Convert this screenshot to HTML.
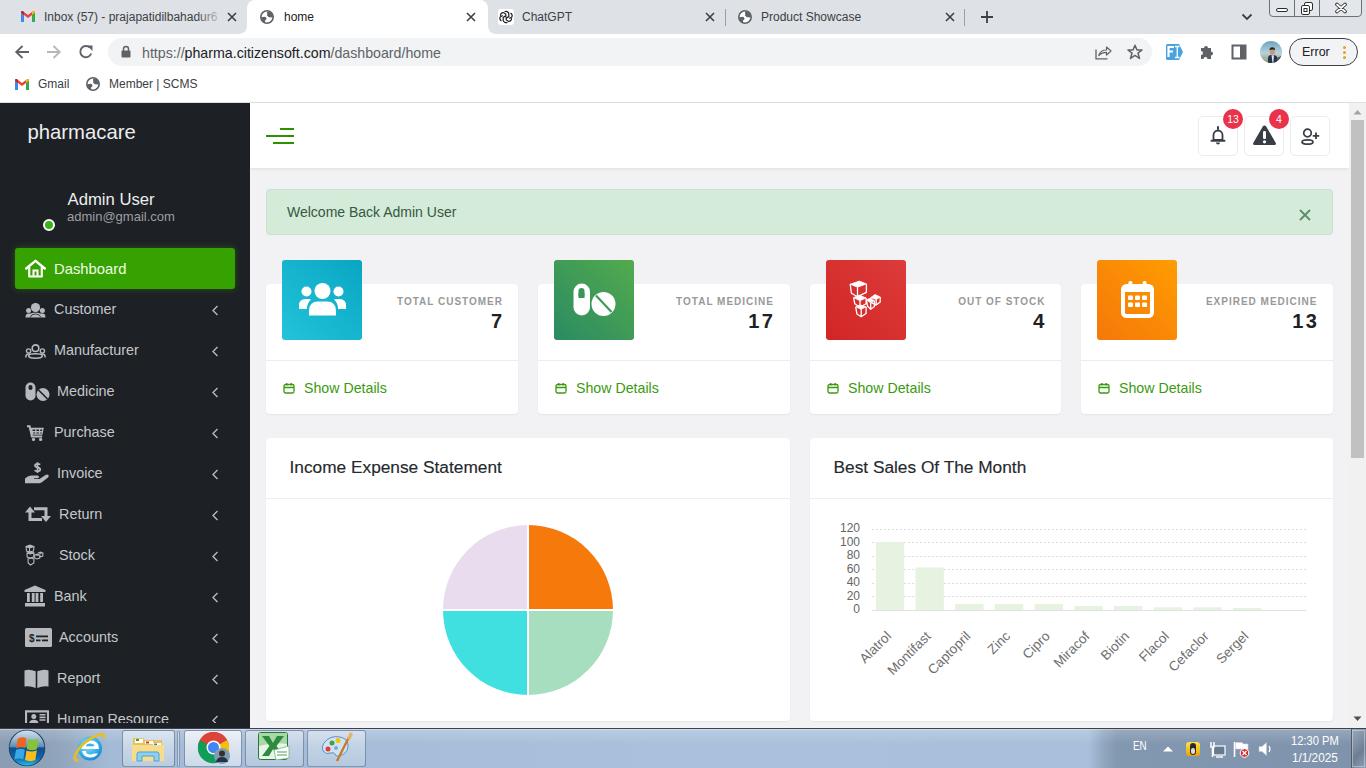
<!DOCTYPE html>
<html><head><meta charset="utf-8">
<style>
*{box-sizing:border-box;margin:0;padding:0}
html,body{width:1366px;height:768px;overflow:hidden;background:#fff;font-family:"Liberation Sans",sans-serif}
.a{position:absolute}
svg{display:block}
/* chrome */
#tabbar{left:0;top:0;width:1366px;height:34px;background:#dee1e6}
.tabt{font-size:12px;color:#3c4043;white-space:nowrap;top:10px;line-height:14px}
#toolbar{left:0;top:34px;width:1366px;height:35px;background:#fff}
#omni{left:108px;top:38px;width:1044px;height:28px;border-radius:14px;background:#f1f3f4}
#bm{left:0;top:69px;width:1366px;height:34px;background:#fff;border-bottom:1px solid #e0e0e0}
/* sidebar */
#side{left:0;top:103px;width:250px;height:625px;background:#1d2024;overflow:hidden}
.mi{left:54px;font-size:14.4px;color:#c4c8cc;line-height:16px;white-space:nowrap}
.chev{left:211px;width:8px;height:10px}
/* content */
#main{left:250px;top:103px;width:1099px;height:625px;background:#f2f2f4;overflow:hidden}
#hdr{left:250px;top:103px;width:1099px;height:65px;background:#fff;box-shadow:0 1px 3px rgba(0,0,0,.08)}
.card{background:#fff;border-radius:4px;box-shadow:0 1px 2px rgba(0,0,0,.06)}
</style></head><body>

<!-- TAB BAR -->
<div id="tabbar" class="a"></div>
<div class="a" style="left:247px;top:0;width:241px;height:34px;background:#fff;border-radius:8px 8px 0 0"></div>
<div class="a" style="left:239px;top:26px;width:8px;height:8px;background:#fff"></div>
<div class="a" style="left:231px;top:18px;width:16px;height:16px;background:#dee1e6;border-bottom-right-radius:8px"></div>
<div class="a" style="left:488px;top:26px;width:8px;height:8px;background:#fff"></div>
<div class="a" style="left:488px;top:18px;width:16px;height:16px;background:#dee1e6;border-bottom-left-radius:8px"></div>


<!-- tab 1 -->
<svg class="a" style="left:20px;top:10px" width="16" height="13" viewBox="0 0 16 13">
<path d="M1 2.5 L1 12 L4 12 L4 5 L8 8 L12 5 L12 12 L15 12 L15 2.5 Q15 0.5 13 1.2 L8 5 L3 1.2 Q1 0.5 1 2.5Z" fill="#ea4335"/>
<path d="M1 2.5 L1 12 L4 12 L4 5 L1 2.6Z" fill="#4285f4"/>
<path d="M12 5 L12 12 L15 12 L15 2.5 Z" fill="#34a853"/>
<path d="M15 2.5 Q15 0.5 13 1.2 L12 2 L12 5 Z" fill="#fbbc04"/>
<path d="M1 2.5 Q1 0.5 3 1.2 L4 2 L4 5 Z" fill="#c5221f"/>
</svg>
<div class="a tabt" style="left:44px;width:176px;overflow:hidden">Inbox (57) - prajapatidilbahadur6</div>
<div class="a" style="left:196px;top:6px;width:28px;height:22px;background:linear-gradient(90deg,rgba(222,225,230,0),#dee1e6)"></div>
<svg class="a" style="left:227px;top:12px" width="10" height="10" viewBox="0 0 10 10"><path d="M1 1L9 9M9 1L1 9" stroke="#3c4043" stroke-width="1.6"/></svg>
<!-- tab 2 active -->
<svg class="a" style="left:260px;top:10px" width="14" height="14" viewBox="0 0 14 14"><circle cx="7" cy="7" r="6.2" fill="#fff" stroke="#5f6368" stroke-width="1.6"/><path d="M7.5 1.2Q12.5 2 13 7.2L11 7.6Q9.8 6.5 9.5 7.5Q8.2 6.8 7.2 5.8Q6.5 4.8 7.5 4.2Q6.2 3.2 7.5 1.2Z" fill="#5f6368"/><path d="M1 7.2L4.8 6.8Q6.2 7 6.5 8.5Q6.8 9.6 5.2 10.2Q4.8 11 5.3 13Q1.2 11.5 1 7.2Z" fill="#5f6368"/></svg>
<div class="a tabt" style="left:284px;color:#202124">home</div>
<svg class="a" style="left:466px;top:12px" width="10" height="10" viewBox="0 0 10 10"><path d="M1 1L9 9M9 1L1 9" stroke="#3c4043" stroke-width="1.6"/></svg>
<!-- tab 3 -->
<div class="a" style="left:498px;top:9px;width:16px;height:16px;background:#fff;border-radius:3px"></div>
<svg class="a" style="left:499px;top:10px" width="14" height="14" viewBox="0 0 24 24"><g fill="none" stroke="#202124" stroke-width="2.1"><path d="M9.5 3.2a4.6 4.6 0 0 1 7.3 3.2v5l-4.3 2.5"/><path d="M14.5 20.8a4.6 4.6 0 0 1-7.3-3.2v-5l4.3-2.5"/><path d="M2.7 10.2a4.6 4.6 0 0 1 4.6-5.8l4.3 2.5v5"/><path d="M21.3 13.8a4.6 4.6 0 0 1-4.6 5.8l-4.3-2.5v-5"/><path d="M4.4 18.6a4.6 4.6 0 0 1-2.3-6.6l4.3-2.5"/><path d="M19.6 5.4a4.6 4.6 0 0 1 2.3 6.6l-4.3 2.5"/></g></svg>
<div class="a tabt" style="left:522px">ChatGPT</div>
<svg class="a" style="left:705px;top:12px" width="10" height="10" viewBox="0 0 10 10"><path d="M1 1L9 9M9 1L1 9" stroke="#3c4043" stroke-width="1.6"/></svg>
<div class="a" style="left:725px;top:9px;width:1px;height:17px;background:#9aa0a6"></div>
<!-- tab 4 -->
<svg class="a" style="left:738px;top:10px" width="14" height="14" viewBox="0 0 14 14"><circle cx="7" cy="7" r="6.2" fill="#fff" stroke="#5f6368" stroke-width="1.6"/><path d="M7.5 1.2Q12.5 2 13 7.2L11 7.6Q9.8 6.5 9.5 7.5Q8.2 6.8 7.2 5.8Q6.5 4.8 7.5 4.2Q6.2 3.2 7.5 1.2Z" fill="#5f6368"/><path d="M1 7.2L4.8 6.8Q6.2 7 6.5 8.5Q6.8 9.6 5.2 10.2Q4.8 11 5.3 13Q1.2 11.5 1 7.2Z" fill="#5f6368"/></svg>
<div class="a tabt" style="left:761px">Product Showcase</div>
<svg class="a" style="left:945px;top:12px" width="10" height="10" viewBox="0 0 10 10"><path d="M1 1L9 9M9 1L1 9" stroke="#3c4043" stroke-width="1.6"/></svg>
<div class="a" style="left:964px;top:9px;width:1px;height:17px;background:#9aa0a6"></div>
<svg class="a" style="left:980px;top:10px" width="14" height="14" viewBox="0 0 14 14"><path d="M7 1V13M1 7H13" stroke="#3c4043" stroke-width="1.8"/></svg>
<svg class="a" style="left:1241px;top:13px" width="12" height="8" viewBox="0 0 12 8"><path d="M1.5 1.5L6 6L10.5 1.5" fill="none" stroke="#3c4043" stroke-width="1.8"/></svg>
<!-- window controls -->
<div class="a" style="left:1269px;top:-3px;width:93px;height:20px;border:1px solid #6d7178;border-radius:0 0 4px 4px;background:#e3e6ea"></div>
<div class="a" style="left:1294px;top:0;width:1px;height:16px;background:#6d7178"></div>
<div class="a" style="left:1319px;top:0;width:1px;height:16px;background:#6d7178"></div>
<div class="a" style="left:1276px;top:8px;width:12px;height:4px;border:1px solid #2d2d2d;border-radius:2px;background:#fff"></div>
<svg class="a" style="left:1300px;top:2px" width="14" height="13" viewBox="0 0 14 13"><rect x="4.5" y="0.5" width="8" height="8" rx="1.5" fill="#fff" stroke="#2d2d2d"/><rect x="1.5" y="3.5" width="8" height="9" rx="1.5" fill="#fff" stroke="#2d2d2d"/><rect x="4" y="6.5" width="3" height="3" fill="none" stroke="#2d2d2d"/></svg>
<svg class="a" style="left:1334px;top:2px" width="14" height="12" viewBox="0 0 14 12"><path d="M3 2.5L11 9.5M11 2.5L3 9.5" stroke="#2d2d2d" stroke-width="3.6" stroke-linecap="round"/><path d="M3 2.5L11 9.5M11 2.5L3 9.5" stroke="#fff" stroke-width="1.8" stroke-linecap="round"/></svg>

<!-- TOOLBAR -->
<div id="toolbar" class="a"></div>
<svg class="a" style="left:14px;top:44px" width="16" height="16" viewBox="0 0 16 16"><path d="M15 8H2.5M8.5 2L2.2 8L8.5 14" fill="none" stroke="#5f6368" stroke-width="1.8"/></svg>
<svg class="a" style="left:46px;top:44px" width="16" height="16" viewBox="0 0 16 16"><path d="M1 8H13.5M7.5 2L13.8 8L7.5 14" fill="none" stroke="#b4b7bb" stroke-width="1.8"/></svg>
<svg class="a" style="left:78px;top:44px" width="16" height="16" viewBox="0 0 16 16"><path d="M13.2 9.5A5.6 5.6 0 1 1 11.8 3.6" fill="none" stroke="#5f6368" stroke-width="1.9"/><path d="M9 1.5H14.5V7Z" fill="#5f6368"/></svg>
<div id="omni" class="a"></div>
<svg class="a" style="left:121px;top:45px" width="10" height="13" viewBox="0 0 10 13"><path d="M2.5 6V4A2.5 2.5 0 0 1 7.5 4V6" fill="none" stroke="#5f6368" stroke-width="1.5"/><rect x="0.5" y="5.5" width="9" height="7" rx="1" fill="#5f6368"/></svg>
<div class="a" style="left:142px;top:44.5px;font-size:14.2px;line-height:16px;color:#5f6368;white-space:nowrap">https://<span style="color:#202124">pharma.citizensoft.com</span>/dashboard/home</div>
<svg class="a" style="left:1095px;top:44px" width="17" height="16" viewBox="0 0 17 16"><path d="M1 5.5V14.8H12.5" fill="none" stroke="#5f6368" stroke-width="1.3"/><path d="M3.8 11.5C4.8 7.8 7.5 6 11.5 6V3L16 7L11.5 11V8.3C8.2 8.3 5.8 9.3 3.8 11.5Z" fill="none" stroke="#5f6368" stroke-width="1.2" stroke-linejoin="round"/></svg>
<svg class="a" style="left:1127px;top:44px" width="16" height="16" viewBox="0 0 16 16"><path d="M8 1.2L10 6H15L11 9.2L12.5 14.5L8 11.4L3.5 14.5L5 9.2L1 6H6Z" fill="none" stroke="#5f6368" stroke-width="1.5" stroke-linejoin="round"/></svg>
<svg class="a" style="left:1166px;top:43px" width="18" height="18" viewBox="0 0 18 18"><path d="M0 2.5Q0 1 1.5 1H13L17 9L13 17H1.5Q0 17 0 15.5Z" fill="#4aa3e0"/><path d="M2.5 14V4H8M2.5 8.5H7" fill="none" stroke="#fff" stroke-width="2.2"/><path d="M9 3.5H13.5M9 14.5H13.5M11.25 3.5V14.5" fill="none" stroke="#fff" stroke-width="1.3"/></svg>
<svg class="a" style="left:1199px;top:44px" width="16" height="16" viewBox="0 0 16 16"><path d="M2 4H5A2 2 0 1 1 9 4H12V7.5A2 2 0 1 1 12 11.5V15H8.5A2 2 0 1 0 4.5 15H2V11A2 2 0 1 0 2 7Z" fill="#5f6368"/></svg>
<svg class="a" style="left:1231px;top:44px" width="16" height="16" viewBox="0 0 16 16"><rect x="1.5" y="1.5" width="13" height="13" fill="none" stroke="#5f6368" stroke-width="2"/><rect x="9" y="1" width="6" height="14" fill="#5f6368"/></svg>
<svg class="a" style="left:1260px;top:41px" width="22" height="22" viewBox="0 0 22 22"><defs><linearGradient id="avg" x1="0" y1="0" x2="0" y2="1"><stop offset="0" stop-color="#6fa3bd"/><stop offset=".55" stop-color="#b7d3de"/><stop offset=".75" stop-color="#a9b49e"/><stop offset="1" stop-color="#8f9c87"/></linearGradient><clipPath id="avc"><circle cx="11" cy="11" r="11"/></clipPath></defs><g clip-path="url(#avc)"><rect width="22" height="22" fill="url(#avg)"/><path d="M8 22V17Q8 14.5 10.5 14H14Q17 14.5 17.5 17V22Z" fill="#25324a"/><path d="M11.5 14.2L12.5 22H13.3L14 14.2Z" fill="#dfe8ee"/><ellipse cx="12.3" cy="10.3" rx="2.7" ry="3.4" fill="#c49a80"/><path d="M9.5 9Q9.5 6.2 12.3 6.2Q15.2 6.2 15 9Q13 7.8 9.5 9Z" fill="#2a2220"/><path d="M17.5 17L21 15V22H18Z" fill="#4a4a44"/></g></svg>
<div class="a" style="left:1289px;top:38px;width:69px;height:28px;border:1px solid #3c4043;border-radius:14px;background:#f1f3f4"></div>
<div class="a" style="left:1302px;top:45px;font-size:12.5px;line-height:14px;color:#202124">Error</div>
<div class="a" style="left:1343px;top:46px;width:3px;height:3px;border-radius:2px;background:#e8a317"></div>
<div class="a" style="left:1343px;top:51px;width:3px;height:3px;border-radius:2px;background:#e8a317"></div>
<div class="a" style="left:1343px;top:56px;width:3px;height:3px;border-radius:2px;background:#e8a317"></div>

<!-- BOOKMARKS -->
<div id="bm" class="a"></div>
<svg class="a" style="left:14px;top:78px" width="16" height="13" viewBox="0 0 16 13">
<path d="M1 2.5 L1 12 L4 12 L4 5 L8 8 L12 5 L12 12 L15 12 L15 2.5 Q15 0.5 13 1.2 L8 5 L3 1.2 Q1 0.5 1 2.5Z" fill="#ea4335"/>
<path d="M1 2.5 L1 12 L4 12 L4 5 L1 2.6Z" fill="#4285f4"/>
<path d="M12 5 L12 12 L15 12 L15 2.5 Z" fill="#34a853"/>
<path d="M15 2.5 Q15 0.5 13 1.2 L12 2 L12 5 Z" fill="#fbbc04"/>
<path d="M1 2.5 Q1 0.5 3 1.2 L4 2 L4 5 Z" fill="#c5221f"/>
</svg>
<div class="a" style="left:38px;top:77px;font-size:12px;line-height:14px;color:#3c4043">Gmail</div>
<svg class="a" style="left:86px;top:77px" width="14" height="14" viewBox="0 0 14 14"><circle cx="7" cy="7" r="6.2" fill="#fff" stroke="#5f6368" stroke-width="1.6"/><path d="M7.5 1.2Q12.5 2 13 7.2L11 7.6Q9.8 6.5 9.5 7.5Q8.2 6.8 7.2 5.8Q6.5 4.8 7.5 4.2Q6.2 3.2 7.5 1.2Z" fill="#5f6368"/><path d="M1 7.2L4.8 6.8Q6.2 7 6.5 8.5Q6.8 9.6 5.2 10.2Q4.8 11 5.3 13Q1.2 11.5 1 7.2Z" fill="#5f6368"/></svg>
<div class="a" style="left:109px;top:77px;font-size:12px;line-height:14px;color:#3c4043">Member | SCMS</div>


<!-- SIDEBAR -->
<div id="side" class="a"></div>
<div class="a" style="left:27.5px;top:121.5px;font-size:20.3px;line-height:20px;color:#eceeef;white-space:nowrap">pharmacare</div>
<div class="a" style="left:67.5px;top:191.8px;font-size:16.7px;line-height:16px;color:#eceeef;white-space:nowrap">Admin User</div>
<div class="a" style="left:67px;top:210px;font-size:13px;line-height:13px;color:#9c9fa3;white-space:nowrap">admin@gmail.com</div>
<div class="a" style="left:43px;top:219px;width:12px;height:12px;border-radius:6px;background:#3cb11a;border:2px solid #fff"></div>
<div class="a" style="left:15px;top:248px;width:220px;height:41px;border-radius:3px;background:#36a201;box-shadow:0 0 7px rgba(60,180,10,.38)"></div>
<svg class="a" style="left:25px;top:259px" width="21" height="19" viewBox="0 0 21 19"><path d="M1.2 9.5L10.5 1.8L19.8 9.5" fill="none" stroke="#fff" stroke-width="2.4" stroke-linecap="round" stroke-linejoin="round"/><path d="M4.2 8V17.5H16.8V8" fill="none" stroke="#fff" stroke-width="2.2" stroke-linejoin="round"/><path d="M8.5 17.5V11.5H12.5V17.5" fill="none" stroke="#fff" stroke-width="2"/></svg>
<div class="a" style="left:54px;top:261.5px;font-size:14.8px;line-height:14px;color:#eefce6;white-space:nowrap">Dashboard</div>
<svg class="a" style="left:25px;top:303px" width="21" height="15" viewBox="0 0 21 15"><circle cx="10.5" cy="4.6" r="4.6" fill="#b6babe"/><circle cx="3.6" cy="7.6" r="2.5" fill="#b6babe"/><circle cx="17.4" cy="7.6" r="2.5" fill="#b6babe"/><path d="M0.5 14.5Q0.5 10.6 3.5 10.6H6Q7 9.8 8.5 9.8H12.5Q14 9.8 15 10.6H17.5Q20.5 10.6 20.5 14.5Z" fill="#b6babe"/><path d="M5 14.5Q6 11 10.5 11Q15 11 16 14.5" fill="none" stroke="#1e2125" stroke-width="0.8"/></svg>
<div class="a mi" style="left:54px;top:302.0px;line-height:14px">Customer</div>
<svg class="a" style="left:211px;top:305px" width="8" height="11" viewBox="0 0 8 11"><path d="M6.5 1L2 5.5L6.5 10" fill="none" stroke="#b6babe" stroke-width="1.4"/></svg>
<svg class="a" style="left:25px;top:344px" width="21" height="15" viewBox="0 0 21 15"><circle cx="10.5" cy="4.2" r="3.3" fill="none" stroke="#b6babe" stroke-width="1.6"/><circle cx="3.6" cy="7" r="2.1" fill="none" stroke="#b6babe" stroke-width="1.4"/><circle cx="17.4" cy="7" r="2.1" fill="none" stroke="#b6babe" stroke-width="1.4"/><ellipse cx="10.5" cy="12" rx="6.8" ry="2.2" fill="none" stroke="#b6babe" stroke-width="1.6"/><path d="M0.8 13.5Q0.8 10 3.6 10Q5 10 5.5 10.5M20.2 13.5Q20.2 10 17.4 10Q16 10 15.5 10.5" fill="none" stroke="#b6babe" stroke-width="1.5"/></svg>
<div class="a mi" style="left:54px;top:343.0px;line-height:14px">Manufacturer</div>
<svg class="a" style="left:211px;top:346px" width="8" height="11" viewBox="0 0 8 11"><path d="M6.5 1L2 5.5L6.5 10" fill="none" stroke="#b6babe" stroke-width="1.4"/></svg>
<svg class="a" style="left:25px;top:382px" width="25" height="19" viewBox="0 0 25 19"><rect x="0.5" y="0.5" width="10" height="18" rx="5" fill="#b6babe"/><rect x="3.5" y="3" width="4" height="5" rx="2" fill="#1e2125"/><circle cx="18" cy="12.5" r="6.5" fill="#b6babe"/><path d="M13.5 8L22.5 17" stroke="#1e2125" stroke-width="1.6"/></svg>
<div class="a mi" style="left:57px;top:384.0px;line-height:14px">Medicine</div>
<svg class="a" style="left:211px;top:387px" width="8" height="11" viewBox="0 0 8 11"><path d="M6.5 1L2 5.5L6.5 10" fill="none" stroke="#b6babe" stroke-width="1.4"/></svg>
<svg class="a" style="left:27px;top:425px" width="17" height="16" viewBox="0 0 17 16"><path d="M0 1.3H2.6L4.9 11.6H15.2" fill="none" stroke="#b6babe" stroke-width="2"/><path d="M3.2 2.8H16.8L15.4 9.8H4.6Z" fill="#b6babe"/><path d="M5.6 4.6H8.2V6H5.6Z M9.4 4.6H12V6H9.4Z M13.2 4.6H15.2L15 6H13.2Z M6 7.4H8.2V8.4H6.1Z M9.4 7.4H12V8.4H9.4Z M13.2 7.4H14.7L14.6 8.4H13.2Z" fill="#1e2125"/><circle cx="6.5" cy="14.4" r="1.6" fill="#b6babe"/><circle cx="13.6" cy="14.4" r="1.6" fill="#b6babe"/></svg>
<div class="a mi" style="left:54px;top:425.0px;line-height:14px">Purchase</div>
<svg class="a" style="left:211px;top:428px" width="8" height="11" viewBox="0 0 8 11"><path d="M6.5 1L2 5.5L6.5 10" fill="none" stroke="#b6babe" stroke-width="1.4"/></svg>
<svg class="a" style="left:25px;top:462px" width="25" height="23" viewBox="0 0 25 23"><path d="M15.2 2.6Q14.4 1.8 12.5 1.8Q10 1.8 10 3.6Q10 5 12.5 5.3Q15.2 5.6 15.2 7.4Q15.2 9.3 12.5 9.3Q10.5 9.3 9.6 8.3M12.5 0.3V11" fill="none" stroke="#b6babe" stroke-width="1.7"/><path d="M0 16.5Q3 13.5 6.5 13.5H12.5Q14 13.5 14 15Q14 16.3 12.5 16.3H9V17H14.5L20.5 13Q22.5 12 23.5 13.3Q24.2 14.5 23 15.5L16.5 20.5Q15.5 21.2 14 21.2H0Z" fill="#b6babe"/></svg>
<div class="a mi" style="left:57px;top:466.0px;line-height:14px">Invoice</div>
<svg class="a" style="left:211px;top:469px" width="8" height="11" viewBox="0 0 8 11"><path d="M6.5 1L2 5.5L6.5 10" fill="none" stroke="#b6babe" stroke-width="1.4"/></svg>
<svg class="a" style="left:25px;top:506px" width="26" height="17" viewBox="0 0 26 17"><path d="M5 5.5V13.5H17" fill="none" stroke="#b6babe" stroke-width="3"/><path d="M0 6.5L5 0.5L10 6.5Z" fill="#b6babe"/><path d="M21 10.5V2.8H9" fill="none" stroke="#b6babe" stroke-width="3"/><path d="M16 10L21 16L26 10Z" fill="#b6babe"/></svg>
<div class="a mi" style="left:59px;top:507.0px;line-height:14px">Return</div>
<svg class="a" style="left:211px;top:510px" width="8" height="11" viewBox="0 0 8 11"><path d="M6.5 1L2 5.5L6.5 10" fill="none" stroke="#b6babe" stroke-width="1.4"/></svg>
<svg class="a" style="left:25px;top:544px" width="19" height="23" viewBox="0 0 19 23"><g fill="none" stroke="#b6babe" stroke-width="1.1"><path d="M1 2.5L5 1L9 2.5L8.5 7L4.5 8L1.5 7Z M1 2.5L4.5 4L9 2.5 M4.5 4V8"/><path d="M2 9L5.5 8L9 9L8.7 13L5 14L2.2 13Z M2 9L5.2 10L9 9"/><path d="M3 15L6 14L9 15L8.8 19L5.5 21L3.2 19Z"/><path d="M9.5 11L12.5 10L15 11L14.8 14L12 15L9.7 14Z M13 9L15.5 8L18 9L17.8 12L15 13L14 12.5"/></g><path d="M1 2.5L5 1L9 2.5L4.5 4Z M2 9L5.5 8L9 9L5.2 10Z M10 11L12.5 10L15 11L12.5 12Z M13.5 9L15.5 8L18 9L15.5 10Z" fill="#b6babe"/></svg>
<div class="a mi" style="left:59px;top:548.0px;line-height:14px">Stock</div>
<svg class="a" style="left:211px;top:551px" width="8" height="11" viewBox="0 0 8 11"><path d="M6.5 1L2 5.5L6.5 10" fill="none" stroke="#b6babe" stroke-width="1.4"/></svg>
<svg class="a" style="left:24px;top:585px" width="22" height="22" viewBox="0 0 22 22"><path d="M11 0.5L21.5 5V7H0.5V5Z" fill="#b6babe"/><rect x="3" y="8" width="2.8" height="9" fill="#b6babe"/><rect x="7.8" y="8" width="2.8" height="9" fill="#b6babe"/><rect x="11.6" y="8" width="2.8" height="9" fill="#b6babe"/><rect x="16.2" y="8" width="2.8" height="9" fill="#b6babe"/><rect x="1" y="18" width="20" height="3.5" fill="#b6babe"/></svg>
<div class="a mi" style="left:54px;top:589.0px;line-height:14px">Bank</div>
<svg class="a" style="left:211px;top:592px" width="8" height="11" viewBox="0 0 8 11"><path d="M6.5 1L2 5.5L6.5 10" fill="none" stroke="#b6babe" stroke-width="1.4"/></svg>
<svg class="a" style="left:25px;top:628px" width="27" height="19" viewBox="0 0 27 19"><rect x="0" y="0" width="27" height="19" rx="1.5" fill="#b6babe"/><text x="4" y="14" font-family="Liberation Sans" font-weight="bold" font-size="10" fill="#1e2125">$</text><rect x="11" y="7.5" width="12" height="1.8" fill="#1e2125"/><rect x="11" y="11.5" width="4.5" height="1.8" fill="#1e2125"/><rect x="17" y="11.5" width="6" height="1.8" fill="#1e2125"/></svg>
<div class="a mi" style="left:59px;top:630.0px;line-height:14px">Accounts</div>
<svg class="a" style="left:211px;top:633px" width="8" height="11" viewBox="0 0 8 11"><path d="M6.5 1L2 5.5L6.5 10" fill="none" stroke="#b6babe" stroke-width="1.4"/></svg>
<svg class="a" style="left:24px;top:669px" width="25" height="19" viewBox="0 0 25 19"><path d="M0.5 1.5Q5 -0.5 11.7 2.2V19Q6 16.5 0.5 17.5Z" fill="#b6babe"/><path d="M24.5 1.5Q20 -0.5 13.3 2.2V19Q19 16.5 24.5 17.5Z" fill="#b6babe"/></svg>
<div class="a mi" style="left:57px;top:671.0px;line-height:14px">Report</div>
<svg class="a" style="left:211px;top:674px" width="8" height="11" viewBox="0 0 8 11"><path d="M6.5 1L2 5.5L6.5 10" fill="none" stroke="#b6babe" stroke-width="1.4"/></svg>
<svg class="a" style="left:25px;top:710px" width="24" height="19" viewBox="0 0 24 19"><path d="M1 18V1.3H23V18" fill="none" stroke="#b6babe" stroke-width="2.2"/><circle cx="8.8" cy="6.6" r="2.5" fill="#b6babe"/><path d="M4.2 13.5Q4.2 9.8 8.8 9.8Q13.4 9.8 13.4 13.5Z" fill="#b6babe"/><path d="M14.5 4.8H20.5M14.5 7.4H20.5M14.5 10H20.5" stroke="#b6babe" stroke-width="1.6"/></svg>
<div class="a mi" style="left:57px;top:712.0px;line-height:14px">Human Resource</div>
<svg class="a" style="left:211px;top:715px" width="8" height="11" viewBox="0 0 8 11"><path d="M6.5 1L2 5.5L6.5 10" fill="none" stroke="#b6babe" stroke-width="1.4"/></svg>


<div class="a" style="left:0;top:723px;width:250px;height:5px;background:#1d2024"></div>
<!-- MAIN -->
<div id="main" class="a"></div>
<div id="hdr" class="a"></div>
<svg class="a" style="left:265px;top:127px" width="30" height="18" viewBox="0 0 30 18"><path d="M15 2H29M1 9H29M8 16H29" stroke="#2f9000" stroke-width="2.2"/></svg>
<!-- header buttons -->
<div class="a" style="left:1198px;top:116px;width:40px;height:40px;border:1px solid #ececec;border-radius:5px;background:#fff"></div>
<div class="a" style="left:1244px;top:116px;width:40px;height:40px;border:1px solid #ececec;border-radius:5px;background:#fff"></div>
<div class="a" style="left:1290px;top:116px;width:40px;height:40px;border:1px solid #ececec;border-radius:5px;background:#fff"></div>
<svg class="a" style="left:1210px;top:126px" width="16" height="19" viewBox="0 0 16 19"><path d="M8 1V3" stroke="#3a3d46" stroke-width="2" stroke-linecap="round"/><path d="M3.5 14V9A4.5 4.5 0 0 1 12.5 9V14Z" fill="none" stroke="#3a3d46" stroke-width="1.8" stroke-linejoin="round"/><path d="M1.5 14.8H14.5" stroke="#3a3d46" stroke-width="2" stroke-linecap="round"/><path d="M6 16.5A2 2 0 0 0 10 16.5Z" fill="#3a3d46"/></svg>
<svg class="a" style="left:1252px;top:124px" width="25" height="22" viewBox="0 0 25 22"><path d="M12.5 1.5Q13.5 1.5 14.2 2.6L23.8 19Q24.3 21 22.5 21H2.5Q0.7 21 1.2 19L10.8 2.6Q11.5 1.5 12.5 1.5Z" fill="#3a3d46"/><rect x="11" y="7" width="3" height="8" rx="1.2" fill="#fff"/><circle cx="12.5" cy="17.8" r="1.6" fill="#fff"/></svg>
<svg class="a" style="left:1301px;top:128px" width="19" height="17" viewBox="0 0 19 17"><circle cx="6.5" cy="5" r="3.8" fill="none" stroke="#3a3d46" stroke-width="1.7"/><ellipse cx="6.5" cy="14" rx="5.5" ry="2.2" fill="none" stroke="#3a3d46" stroke-width="1.7"/><path d="M15 4.5V11M11.8 7.8H18.2" stroke="#3a3d46" stroke-width="1.8"/></svg>
<div class="a" style="left:1223px;top:109px;width:20px;height:20px;border-radius:10px;background:#e9334a;color:#fff;font-size:10.5px;line-height:20px;text-align:center">13</div>
<div class="a" style="left:1269px;top:109px;width:20px;height:20px;border-radius:10px;background:#e9334a;color:#fff;font-size:10.5px;line-height:20px;text-align:center">4</div>

<!-- ALERT -->
<div class="a" style="left:266px;top:189px;width:1067px;height:46px;background:#d4ebd9;border:1px solid #c6e3cc;border-radius:4px"></div>
<div class="a" style="left:287px;top:204.9px;font-size:14px;line-height:14px;color:#36583f;white-space:nowrap">Welcome Back Admin User</div>
<svg class="a" style="left:1299px;top:209px" width="12" height="12" viewBox="0 0 12 12"><path d="M1 1L11 11M11 1L1 11" stroke="#5c8d69" stroke-width="1.8"/></svg>
<div class="a card" style="left:266px;top:284px;width:252px;height:130px"></div>
<div class="a" style="left:266px;top:360px;width:252px;height:1px;background:#ececec"></div>
<div class="a" style="left:282px;top:260px;width:80px;height:80px;border-radius:3px;background:linear-gradient(45deg,#23c3da,#09a6c3)"></div>
<svg class="a" style="left:299px;top:283px" width="47" height="33" viewBox="0 0 47 33"><circle cx="23.5" cy="8" r="8" fill="#fff"/><circle cx="7.5" cy="8.5" r="5" fill="#fff"/><circle cx="39.5" cy="8.5" r="5" fill="#fff"/><path d="M10 32.5V28Q10 18.5 19 18.5H28Q37 18.5 37 28V32.5Z" fill="#fff"/><path d="M0 26V22.5Q0 16 6.5 16H10Q11.5 16 12 16.5Q8.5 19.5 8 24.5V26Z M47 26V22.5Q47 16 40.5 16H37Q35.5 16 35 16.5Q38.5 19.5 39 24.5V26Z" fill="#fff"/></svg>
<div class="a" style="left:266px;width:237px;top:296.8px;font-size:10px;line-height:10px;font-weight:bold;letter-spacing:1px;color:#999;text-align:right;white-space:nowrap">TOTAL CUSTOMER</div>
<div class="a" style="left:266px;width:236px;top:311.4px;font-size:20px;line-height:20px;font-weight:bold;color:#1f2124;text-align:right">7</div>
<svg class="a" style="left:283px;top:382px" width="12" height="12" viewBox="0 0 12 12"><rect x="1" y="2.5" width="10" height="8.5" rx="1.5" fill="none" stroke="#3a9a0e" stroke-width="1.3"/><path d="M1 5.5H11M3.8 1V3.5M8.2 1V3.5" stroke="#3a9a0e" stroke-width="1.3"/></svg>
<div class="a" style="left:304px;top:381px;font-size:14.2px;line-height:14px;color:#3b9a0f;white-space:nowrap">Show Details</div>
<div class="a card" style="left:538px;top:284px;width:252px;height:130px"></div>
<div class="a" style="left:538px;top:360px;width:252px;height:1px;background:#ececec"></div>
<div class="a" style="left:554px;top:260px;width:80px;height:80px;border-radius:3px;background:linear-gradient(45deg,#2a8b62,#53aa4d)"></div>
<svg class="a" style="left:573px;top:283px" width="43" height="33" viewBox="0 0 43 33"><rect x="0.5" y="0.5" width="16.5" height="32" rx="8.25" fill="#fff"/><rect x="5.5" y="5" width="6" height="10" rx="3" fill="#3a9658"/><rect x="5.5" y="10" width="6" height="5" fill="#3a9658"/><circle cx="30.5" cy="21" r="12" fill="#fff"/><path d="M23 12.5L38.5 29" stroke="#3f9a56" stroke-width="2.2"/></svg>
<div class="a" style="left:538px;width:236px;top:296.8px;font-size:10px;line-height:10px;font-weight:bold;letter-spacing:1px;color:#999;text-align:right;white-space:nowrap">TOTAL MEDICINE</div>
<div class="a" style="left:538px;width:237.5px;top:311.4px;font-size:20px;line-height:20px;font-weight:bold;color:#1f2124;text-align:right;letter-spacing:2.5px">17</div>
<svg class="a" style="left:555px;top:382px" width="12" height="12" viewBox="0 0 12 12"><rect x="1" y="2.5" width="10" height="8.5" rx="1.5" fill="none" stroke="#3a9a0e" stroke-width="1.3"/><path d="M1 5.5H11M3.8 1V3.5M8.2 1V3.5" stroke="#3a9a0e" stroke-width="1.3"/></svg>
<div class="a" style="left:576px;top:381px;font-size:14.2px;line-height:14px;color:#3b9a0f;white-space:nowrap">Show Details</div>
<div class="a card" style="left:810px;top:284px;width:251px;height:130px"></div>
<div class="a" style="left:810px;top:360px;width:251px;height:1px;background:#ececec"></div>
<div class="a" style="left:826px;top:260px;width:80px;height:80px;border-radius:3px;background:linear-gradient(45deg,#d22525,#dc3c3a)"></div>
<svg class="a" style="left:845px;top:275px" width="40" height="47" viewBox="0 0 40 47"><path d="M5.2 9.2L6.4 18.225L12.5 21.7L21.4 17.450000000000003L21.4 8.9 M12.5 12.2L12.5 21.7M8.6 22.6L9.799999999999999 28.775000000000002L15 32.2L21.1 28.75L21.1 22.9 M15 25.7L15 32.2M10.7 31.8L11.899999999999999 38.925L16.2 41.8L21.1 38.55L21.1 31.8 M16.2 34.3L16.2 41.8M21.4 25L22.599999999999998 31.175L25.7 34.3L29.4 31.55L29.4 25.7 M25.7 27.8L25.7 34.3M25.7 22.6L26.9 27.825000000000003L31.2 30.0L35.2 26.95L35.2 22 M31.2 24.5L31.2 30.0" fill="none" stroke="#fff" stroke-width="1.3" stroke-linejoin="round"/><path d="M5.2 9.2L14.4 6.1L21.4 8.9L12.5 12.2ZM8.6 22.6L14.4 20.2L21.1 22.9L15 25.7ZM10.7 31.8L15.6 30L21.1 31.8L16.2 34.3ZM21.4 25L25 23.2L29.4 25.7L25.7 27.8ZM25.7 22.6L30 19.6L35.2 22L31.2 24.5Z" fill="#fff" stroke="#fff" stroke-width="0.8" stroke-linejoin="round"/></svg>
<div class="a" style="left:810px;width:235.5px;top:296.8px;font-size:10px;line-height:10px;font-weight:bold;letter-spacing:1px;color:#999;text-align:right;white-space:nowrap">OUT OF STOCK</div>
<div class="a" style="left:810px;width:234.5px;top:311.4px;font-size:20.5px;line-height:20px;font-weight:bold;color:#1f2124;text-align:right">4</div>
<svg class="a" style="left:827px;top:382px" width="12" height="12" viewBox="0 0 12 12"><rect x="1" y="2.5" width="10" height="8.5" rx="1.5" fill="none" stroke="#3a9a0e" stroke-width="1.3"/><path d="M1 5.5H11M3.8 1V3.5M8.2 1V3.5" stroke="#3a9a0e" stroke-width="1.3"/></svg>
<div class="a" style="left:848px;top:381px;font-size:14.2px;line-height:14px;color:#3b9a0f;white-space:nowrap">Show Details</div>
<div class="a card" style="left:1081px;top:284px;width:252px;height:130px"></div>
<div class="a" style="left:1081px;top:360px;width:252px;height:1px;background:#ececec"></div>
<div class="a" style="left:1097px;top:260px;width:80px;height:80px;border-radius:3px;background:linear-gradient(45deg,#f5780a,#ff9c00)"></div>
<svg class="a" style="left:1121px;top:281px" width="33" height="37" viewBox="0 0 33 37"><rect x="7.5" y="0" width="3.8" height="7" rx="1.5" fill="#fff"/><rect x="21.7" y="0" width="3.8" height="7" rx="1.5" fill="#fff"/><rect x="2" y="5" width="29" height="30" rx="3.5" fill="none" stroke="#fff" stroke-width="4"/><rect x="2" y="5" width="29" height="6" fill="#fff"/><rect x="7" y="14.5" width="5" height="4.5" rx="1" fill="#fff"/><rect x="14" y="14.5" width="5" height="4.5" rx="1" fill="#fff"/><rect x="21" y="14.5" width="5" height="4.5" rx="1" fill="#fff"/><rect x="7" y="21.5" width="5" height="4.5" rx="1" fill="#fff"/><rect x="14" y="21.5" width="5" height="4.5" rx="1" fill="#fff"/><rect x="21" y="21.5" width="5" height="4.5" rx="1" fill="#fff"/></svg>
<div class="a" style="left:1081px;width:236.5px;top:296.8px;font-size:10px;line-height:10px;font-weight:bold;letter-spacing:1px;color:#999;text-align:right;white-space:nowrap">EXPIRED MEDICINE</div>
<div class="a" style="left:1081px;width:238.5px;top:311.4px;font-size:20px;line-height:20px;font-weight:bold;color:#1f2124;text-align:right;letter-spacing:2.5px">13</div>
<svg class="a" style="left:1098px;top:382px" width="12" height="12" viewBox="0 0 12 12"><rect x="1" y="2.5" width="10" height="8.5" rx="1.5" fill="none" stroke="#3a9a0e" stroke-width="1.3"/><path d="M1 5.5H11M3.8 1V3.5M8.2 1V3.5" stroke="#3a9a0e" stroke-width="1.3"/></svg>
<div class="a" style="left:1119px;top:381px;font-size:14.2px;line-height:14px;color:#3b9a0f;white-space:nowrap">Show Details</div>

<!-- CHART CARDS -->
<div class="a card" style="left:266px;top:438px;width:524px;height:283px"></div>
<div class="a" style="left:266px;top:498px;width:524px;height:1px;background:#eeeeee"></div>
<div class="a" style="left:289.5px;top:458.9px;font-size:17.3px;line-height:17px;color:#25292d;-webkit-text-stroke:0.15px #25292d;white-space:nowrap">Income Expense Statement</div>
<svg class="a" style="left:428px;top:510px" width="200" height="200" viewBox="0 0 200 200">
<path d="M100 100L100 15A85 85 0 0 1 185 100Z" fill="#f57a0b"/>
<path d="M100 100L185 100A85 85 0 0 1 100 185Z" fill="#a8dec0"/>
<path d="M100 100L100 185A85 85 0 0 1 15 100Z" fill="#40e0e0"/>
<path d="M100 100L15 100A85 85 0 0 1 100 15Z" fill="#e8dcee"/>
<path d="M100 14V186M14 100H186" stroke="#fff" stroke-width="2"/>
</svg>
<div class="a card" style="left:810px;top:438px;width:523px;height:283px"></div>
<div class="a" style="left:810px;top:498px;width:523px;height:1px;background:#eeeeee"></div>
<div class="a" style="left:833.5px;top:458.9px;font-size:17.3px;line-height:17px;color:#25292d;-webkit-text-stroke:0.15px #25292d;white-space:nowrap">Best Sales Of The Month</div>
<svg class="a" style="left:810px;top:500px" width="523" height="220" viewBox="810 500 523 220">
<path d="M872 529.5H1306" stroke="#dcdcdc" stroke-width="1" stroke-dasharray="2 2"/>
<text x="860" y="532.2" text-anchor="end" font-family="Liberation Sans" font-size="12" fill="#666">120</text>
<path d="M872 542.5H1306" stroke="#dcdcdc" stroke-width="1" stroke-dasharray="2 2"/>
<text x="860" y="545.7" text-anchor="end" font-family="Liberation Sans" font-size="12" fill="#666">100</text>
<path d="M872 556.5H1306" stroke="#dcdcdc" stroke-width="1" stroke-dasharray="2 2"/>
<text x="860" y="559.2" text-anchor="end" font-family="Liberation Sans" font-size="12" fill="#666">80</text>
<path d="M872 569.5H1306" stroke="#dcdcdc" stroke-width="1" stroke-dasharray="2 2"/>
<text x="860" y="572.7" text-anchor="end" font-family="Liberation Sans" font-size="12" fill="#666">60</text>
<path d="M872 583.5H1306" stroke="#dcdcdc" stroke-width="1" stroke-dasharray="2 2"/>
<text x="860" y="586.2" text-anchor="end" font-family="Liberation Sans" font-size="12" fill="#666">40</text>
<path d="M872 596.5H1306" stroke="#dcdcdc" stroke-width="1" stroke-dasharray="2 2"/>
<text x="860" y="599.7" text-anchor="end" font-family="Liberation Sans" font-size="12" fill="#666">20</text>
<text x="860" y="613.2" text-anchor="end" font-family="Liberation Sans" font-size="12" fill="#666">0</text>
<path d="M872 610.5H1306" stroke="#e0e0e0" stroke-width="1"/>
<rect x="875.8" y="541.8" width="28.4" height="68.2" fill="#e7f3e1"/>
<text x="892.0" y="637" text-anchor="end" transform="rotate(-45 892.0 637)" font-family="Liberation Sans" font-size="13.5" fill="#6e6e6e">Alatrol</text>
<rect x="915.5" y="567.5" width="28.4" height="42.5" fill="#e7f3e1"/>
<text x="931.7" y="637" text-anchor="end" transform="rotate(-45 931.7 637)" font-family="Liberation Sans" font-size="13.5" fill="#6e6e6e">Montifast</text>
<rect x="955.2" y="603.9" width="28.4" height="6.1" fill="#e7f3e1"/>
<text x="971.4" y="637" text-anchor="end" transform="rotate(-45 971.4 637)" font-family="Liberation Sans" font-size="13.5" fill="#6e6e6e">Captopril</text>
<rect x="994.9" y="603.9" width="28.4" height="6.1" fill="#e7f3e1"/>
<text x="1011.1" y="637" text-anchor="end" transform="rotate(-45 1011.1 637)" font-family="Liberation Sans" font-size="13.5" fill="#6e6e6e">Zinc</text>
<rect x="1034.6" y="603.9" width="28.4" height="6.1" fill="#e7f3e1"/>
<text x="1050.8" y="637" text-anchor="end" transform="rotate(-45 1050.8 637)" font-family="Liberation Sans" font-size="13.5" fill="#6e6e6e">Cipro</text>
<rect x="1074.3" y="606.0" width="28.4" height="4.0" fill="#e7f3e1"/>
<text x="1090.5" y="637" text-anchor="end" transform="rotate(-45 1090.5 637)" font-family="Liberation Sans" font-size="13.5" fill="#6e6e6e">Miracof</text>
<rect x="1114.0" y="606.0" width="28.4" height="4.0" fill="#e7f3e1"/>
<text x="1130.2" y="637" text-anchor="end" transform="rotate(-45 1130.2 637)" font-family="Liberation Sans" font-size="13.5" fill="#6e6e6e">Biotin</text>
<rect x="1153.7" y="607.3" width="28.4" height="2.7" fill="#e7f3e1"/>
<text x="1169.9" y="637" text-anchor="end" transform="rotate(-45 1169.9 637)" font-family="Liberation Sans" font-size="13.5" fill="#6e6e6e">Flacol</text>
<rect x="1193.4" y="607.3" width="28.4" height="2.7" fill="#e7f3e1"/>
<text x="1209.6" y="637" text-anchor="end" transform="rotate(-45 1209.6 637)" font-family="Liberation Sans" font-size="13.5" fill="#6e6e6e">Cefaclor</text>
<rect x="1233.1" y="608.0" width="28.4" height="2.0" fill="#e7f3e1"/>
<text x="1249.3" y="637" text-anchor="end" transform="rotate(-45 1249.3 637)" font-family="Liberation Sans" font-size="13.5" fill="#6e6e6e">Sergel</text>
</svg>

<!-- scrollbar -->
<div class="a" style="left:1349px;top:103px;width:17px;height:625px;background:#f1f1f1"></div>
<div class="a" style="left:1351px;top:120px;width:13px;height:338px;background:#c1c1c1"></div>
<svg class="a" style="left:1353px;top:109px" width="9" height="6" viewBox="0 0 9 6"><path d="M0.5 5.5L4.5 1L8.5 5.5Z" fill="#a3a3a3"/></svg>
<svg class="a" style="left:1353px;top:716px" width="9" height="6" viewBox="0 0 9 6"><path d="M0.5 0.5L4.5 5L8.5 0.5Z" fill="#505050"/></svg>


<!-- TASKBAR -->
<div class="a" style="left:0;top:728px;width:1366px;height:40px;background:linear-gradient(90deg,#8a9cb1 0,#8fa3b9 4%,#a3bbd6 8%,#a9c1dc 50%,#a8c0db 79.7%,#90a6bf 80.8%,#8297b0 81.8%,#7f93ac 100%)"></div>
<div class="a" style="left:0;top:728px;width:1366px;height:1px;background:#3a4250"></div>
<div class="a" style="left:0;top:729px;width:1366px;height:1px;background:rgba(255,255,255,.45)"></div>
<div class="a" style="left:0;top:730px;width:1366px;height:14px;background:linear-gradient(180deg,rgba(255,255,255,.18),rgba(255,255,255,0))"></div>
<!-- start orb -->
<svg class="a" style="left:8px;top:729px" width="38" height="38" viewBox="0 0 38 38"><defs><linearGradient id="orbg" x1="0" y1="0" x2="0" y2="1"><stop offset="0" stop-color="#d3e3ee"/><stop offset=".25" stop-color="#9dbbd3"/><stop offset=".46" stop-color="#5f8db4"/><stop offset=".5" stop-color="#0d4f8e"/><stop offset=".78" stop-color="#0f66a8"/><stop offset="1" stop-color="#22c6f0"/></linearGradient></defs><circle cx="19" cy="19" r="18" fill="url(#orbg)" stroke="#1d3d63" stroke-width="1.2"/><circle cx="19" cy="19" r="18.6" fill="none" stroke="rgba(255,255,255,.45)" stroke-width=".6"/>
<path d="M9.5 10Q13 7 18.5 9.2L17 19Q12.5 17 8.2 19.5Z" fill="#f0641e"/><path d="M20 9.8Q25 12 30.5 9.5L29 20Q24.5 22.5 18.8 20Z" fill="#86c23a"/><path d="M8 21Q12.5 18.7 16.8 20.8L15.3 30.5Q11 28.5 6.3 30.5Z" fill="#3aa6e8"/><path d="M18.5 21.5Q23.5 23.7 28.8 21.3L27.3 31Q22.5 33.3 17 31Z" fill="#fcbc1c"/></svg>
<!-- IE -->
<svg class="a" style="left:73px;top:731px" width="32" height="32" viewBox="0 0 32 32"><defs><radialGradient id="ieg" cx="40%" cy="35%" r="70%"><stop offset="0" stop-color="#9fe3ff"/><stop offset=".6" stop-color="#36b3ec"/><stop offset="1" stop-color="#1a86c8"/></radialGradient></defs><circle cx="17" cy="17.5" r="12" fill="url(#ieg)"/><path d="M8.5 18H26Q26 9.5 17.2 9.5Q9.5 9.5 8.5 18Z" fill="#fff"/><path d="M12.8 15.3H21.5Q21 12.5 17.2 12.5Q13.4 12.5 12.8 15.3Z" fill="#3ab5ec"/><path d="M9 20Q10.5 26.5 17.2 26.5Q22.5 26.5 25 22.5H20.5Q19.2 23.5 17.2 23.5Q13.2 23.5 12.8 20Z" fill="#fff"/><path d="M5.5 29.5Q-1 30 3.5 21.5Q9.5 10 26.5 3.5Q32.5 1.5 30.5 7.5" fill="none" stroke="#e9bd1f" stroke-width="2.6"/></svg>
<!-- explorer -->
<div class="a" style="left:122px;top:730px;width:53px;height:37px;border:1px solid rgba(60,80,110,.55);border-radius:3px;background:linear-gradient(180deg,rgba(255,255,255,.55),rgba(255,255,255,.25))"></div>
<div class="a" style="left:177px;top:731px;width:3px;height:36px;border:1px solid rgba(60,80,110,.45);border-radius:1px;background:rgba(255,255,255,.35)"></div>
<svg class="a" style="left:131px;top:734px" width="34" height="30" viewBox="0 0 34 30"><path d="M2 4H12L14 6H31V26H2Z" fill="#e8c35c"/><rect x="4" y="5" width="8" height="4" fill="#fff"/><rect x="14" y="7" width="8" height="3" fill="#fff"/><rect x="22" y="9" width="8" height="3" fill="#fff"/><rect x="5" y="5" width="3" height="2" fill="#2aa54b"/><rect x="15" y="7.5" width="3" height="2" fill="#d33"/><rect x="23" y="9.5" width="3" height="2" fill="#3a7bd5"/><path d="M1 11H33V27H1Z" fill="#f6dc8b"/><path d="M6 27V20Q6 18 8 18H26Q28 18 28 20V27H23V22H11V27Z" fill="#8fd0f0" stroke="#4aa3d8" stroke-width="1"/></svg>
<!-- chrome -->
<div class="a" style="left:184px;top:730px;width:58px;height:37px;border:1px solid rgba(60,80,110,.55);border-radius:3px;background:linear-gradient(180deg,rgba(255,255,255,.75),rgba(255,255,255,.45))"></div>
<svg class="a" style="left:197px;top:731px" width="34" height="34" viewBox="0 0 34 34"><circle cx="16.5" cy="16.5" r="15.5" fill="#db4437"/><path d="M16.5 16.5L30 9A15.5 15.5 0 0 1 24.5 30Z" fill="#f4c20d"/><path d="M16.5 16.5L24.5 30A15.5 15.5 0 0 1 3 9Z" fill="#0f9d58"/><path d="M16.5 16.5L3 9A15.5 15.5 0 0 1 30 9Z" fill="#db4437"/><circle cx="16.5" cy="16.5" r="7" fill="#fff"/><circle cx="16.5" cy="16.5" r="5.5" fill="#4285f4"/><circle cx="25" cy="25" r="8" fill="#7f9db4"/><circle cx="25" cy="22.5" r="3" fill="#3a2e28"/><path d="M19 31Q20 26 25 26Q30 26 31 31Z" fill="#243247"/></svg>
<!-- excel -->
<div class="a" style="left:245px;top:730px;width:59px;height:37px;border:1px solid rgba(60,80,110,.5);border-radius:3px;background:linear-gradient(180deg,rgba(255,255,255,.45),rgba(255,255,255,.18))"></div>
<svg class="a" style="left:258px;top:732px" width="32" height="28" viewBox="0 0 32 28"><rect x="0.5" y="0.5" width="29" height="27" rx="2" fill="#e8f4e8" stroke="#1e7a36" stroke-width="1"/><path d="M1 1H29V12Q15 10 1 14Z" fill="#a9d7a5"/><path d="M4 4H11L15 11L19 4H26L18.5 14L26 24H19L15 17L11 24H4L11.5 14Z" fill="#2c8b3e"/><path d="M16 18L31 14L31 26L18 28Z" fill="#fff" stroke="#7bb37f" stroke-width=".8"/><path d="M19 20H29M19 23H29" stroke="#4da35a" stroke-width="1"/></svg>
<!-- paint -->
<div class="a" style="left:307px;top:730px;width:59px;height:37px;border:1px solid rgba(60,80,110,.5);border-radius:3px;background:linear-gradient(180deg,rgba(255,255,255,.45),rgba(255,255,255,.18))"></div>
<svg class="a" style="left:320px;top:731px" width="34" height="32" viewBox="0 0 34 32"><path d="M4 12Q10 4 20 6Q29 8 28 16Q27 23 19 25Q16 26 15 23Q14 21 11 22Q6 24 3 20Q1 16 4 12Z" fill="#cfe4f3" stroke="#5c8fbf" stroke-width="1"/><circle cx="8" cy="18" r="2.5" fill="#e53935"/><circle cx="12" cy="12" r="2.5" fill="#43a047"/><circle cx="18" cy="9.5" r="2.5" fill="#f4c20d"/><circle cx="16" cy="17" r="2" fill="#78a9d8"/><path d="M17 30L29 6" stroke="#c7792a" stroke-width="2.4"/><path d="M27 8L30 1L33 3L30 9Z" fill="#e8b06a"/></svg>
<!-- tray -->
<div class="a" style="left:1133px;top:740px;font-size:12px;line-height:12px;color:#fff;transform:scaleX(.82);transform-origin:0 0">EN</div>
<svg class="a" style="left:1162px;top:745px" width="12" height="7" viewBox="0 0 12 7"><path d="M1 6.5L6 1.5L11 6.5Z" fill="#fff"/></svg>
<div class="a" style="left:1186px;top:742px;width:14px;height:14px;border-radius:3px;background:linear-gradient(180deg,#ffe14a,#e9a400)"></div>
<div class="a" style="left:1190px;top:743px;width:6px;height:12px;border-radius:3px;background:#2b2b2b"></div>
<div class="a" style="left:1191px;top:748px;width:4px;height:6px;border-radius:2px;background:#ddd"></div>
<svg class="a" style="left:1209px;top:741px" width="17" height="17" viewBox="0 0 17 17"><rect x="4.5" y="5" width="11.5" height="9" fill="#667a90" stroke="#fff" stroke-width="1.2"/><path d="M7 16H14" stroke="#fff" stroke-width="1.4"/><path d="M2 1V6H5V1M3.5 6V16" fill="none" stroke="#fff" stroke-width="1.5"/></svg>
<svg class="a" style="left:1233px;top:741px" width="17" height="17" viewBox="0 0 17 17"><path d="M1.5 1V16" stroke="#fff" stroke-width="1.6"/><path d="M2.5 1.5H9L10.5 3H15V9H9L8 8H2.5Z" fill="#fff" stroke="#cfd6de" stroke-width=".6"/><circle cx="11.5" cy="12" r="4.3" fill="#d62828" stroke="#fff" stroke-width="1"/><path d="M9.5 10L13.5 14M13.5 10L9.5 14" stroke="#fff" stroke-width="1.4"/></svg>
<svg class="a" style="left:1258px;top:741px" width="15" height="16" viewBox="0 0 15 16"><path d="M1 5.5H4L8.5 1.5V14.5L4 10.5H1Z" fill="#fff" stroke="#bfc7d0" stroke-width=".6"/><path d="M11 5Q13 8 11 11" fill="none" stroke="#fff" stroke-width="1.2"/></svg>
<div class="a" style="left:1291px;top:735px;font-size:12px;line-height:12px;color:#fff;white-space:nowrap;transform:scaleX(.93);transform-origin:0 0">12:30 PM</div>
<div class="a" style="left:1292px;top:752px;font-size:12px;line-height:12px;color:#fff;white-space:nowrap;transform:scaleX(.98);transform-origin:0 0">1/1/2025</div>
<div class="a" style="left:1351px;top:729px;width:15px;height:39px;border-left:1px solid #4f5b6b;background:linear-gradient(135deg,#9aaabb,#6d7f93 60%,#90a0b2)"></div>
<div class="a" style="left:1352px;top:730px;width:13px;height:37px;border:1px solid rgba(255,255,255,.35)"></div>

</body></html>
